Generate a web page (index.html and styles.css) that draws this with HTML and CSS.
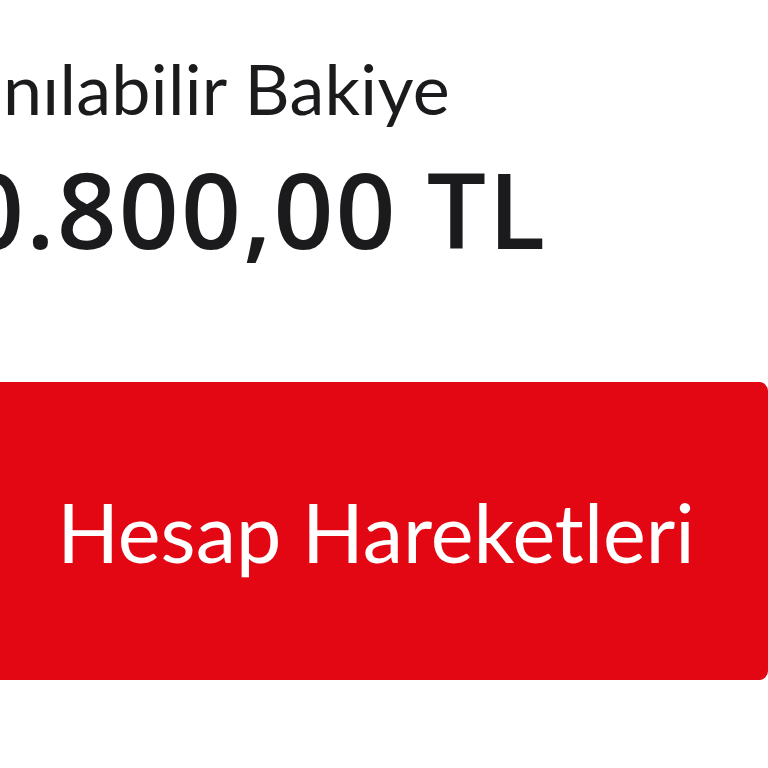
FILE: index.html
```html
<!DOCTYPE html>
<html lang="tr">
<head>
<meta charset="utf-8">
<link rel="stylesheet" href="styles.css">
</head>
<body>
<main class="screen">
  <section class="balance">
    <div class="balance-label">Kullanılabilir Bakiye</div>
    <div class="balance-amount">10.800,00 TL</div>
  </section>
  <button class="action">Hesap Hareketleri</button>
</main>
</body>
</html>
```
FILE: styles.css
```css
html, body {
  margin: 0;
  padding: 0;
  background: #ffffff;
  overflow: hidden;
}
.screen {
  width: 768px;
  height: 768px;
  font-family: "Lato", "Noto Sans", sans-serif;
  color: #1b1b1d;
}
.balance {
  padding-top: 48px;
}
.balance-label {
  margin-left: -150px;
  font-size: 70px;
  line-height: 80px;
  font-weight: 400;
  letter-spacing: 0.3px;
  white-space: nowrap;
}
.balance-amount {
  margin-top: 21px;
  margin-left: -98px;
  font-family: "Open Sans", "Noto Sans", sans-serif;
  font-size: 105px;
  line-height: 120px;
  font-weight: 600;
  letter-spacing: 2px;
  white-space: nowrap;
}
.action {
  display: flex;
  align-items: center;
  justify-content: center;
  margin-top: 113px;
  margin-left: -16px;
  width: 784px;
  height: 298px;
  border: 0;
  border-radius: 9px;
  background: #e30613;
  color: #ffffff;
  font-family: "Lato", "Noto Sans", sans-serif;
  font-size: 81px;
  font-weight: 400;
  padding: 0;
}
```
